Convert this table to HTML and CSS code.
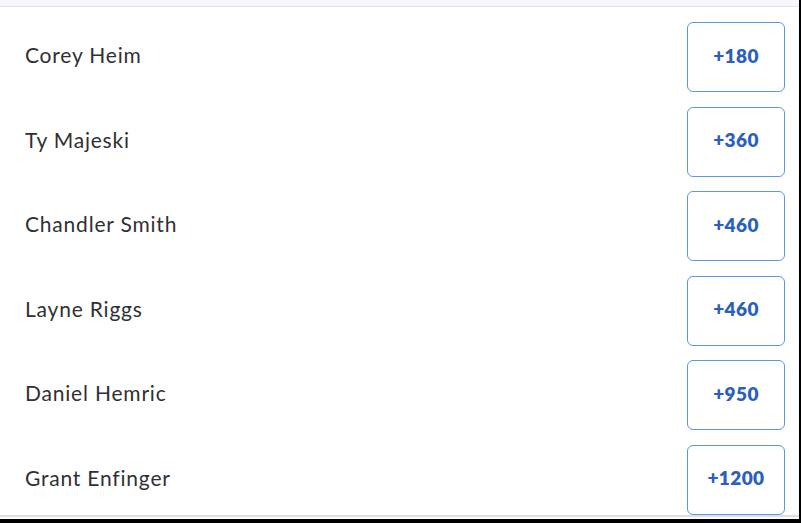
FILE: index.html
```html
<!DOCTYPE html>
<html>
<head>
<meta charset="utf-8">
<link rel="stylesheet" href="styles.css">
</head>
<body>
<div class="page">
  <div class="topband"></div>
  <ul class="list">
    <li class="row"><span class="name">Corey Heim</span><button class="odds">+180</button></li>
    <li class="row"><span class="name">Ty Majeski</span><button class="odds">+360</button></li>
    <li class="row"><span class="name">Chandler Smith</span><button class="odds">+460</button></li>
    <li class="row"><span class="name">Layne Riggs</span><button class="odds">+460</button></li>
    <li class="row"><span class="name">Daniel Hemric</span><button class="odds">+950</button></li>
    <li class="row"><span class="name">Grant Enfinger</span><button class="odds">+1200</button></li>
  </ul>
</div>
</body>
</html>
```
FILE: styles.css
```css
html, body {
  margin: 0;
  padding: 0;
  background: #000;
  overflow: hidden;
}
.page {
  width: 799px;
  height: 519px;
  background: #fff;
  display: flex;
  flex-direction: column;
  box-sizing: border-box;
  border-bottom: 3px solid #fff;
}
.topband {
  height: 6px;
  background: #f6f8fb;
  border-bottom: 1px solid #dde2e8;
  flex: none;
}
.list {
  list-style: none;
  margin: 0;
  padding: 15px 14px 0 25px;
  flex: 1;
  display: flex;
  flex-direction: column;
  gap: 14.5px;
  border-bottom: 2px solid #dcdfe3;
}
.row {
  display: flex;
  align-items: center;
  justify-content: space-between;
  height: 70px;
}
.name {
  font-family: "Lato", "Open Sans", sans-serif;
  font-size: 21px;
  line-height: 24px;
  padding-bottom: 4px;
  color: #2f3033;
  letter-spacing: 0.8px;
}
.odds {
  width: 98px;
  height: 70px;
  box-sizing: border-box;
  border: 1.5px solid #5b97e6;
  border-radius: 6px;
  background: #fff;
  font-family: "Lato", "Open Sans", sans-serif;
  font-weight: 800;
  font-size: 19px;
  line-height: 22px;
  letter-spacing: 0.4px;
  color: #2a60bd;
  padding: 0 0 3px 0;
}
```
